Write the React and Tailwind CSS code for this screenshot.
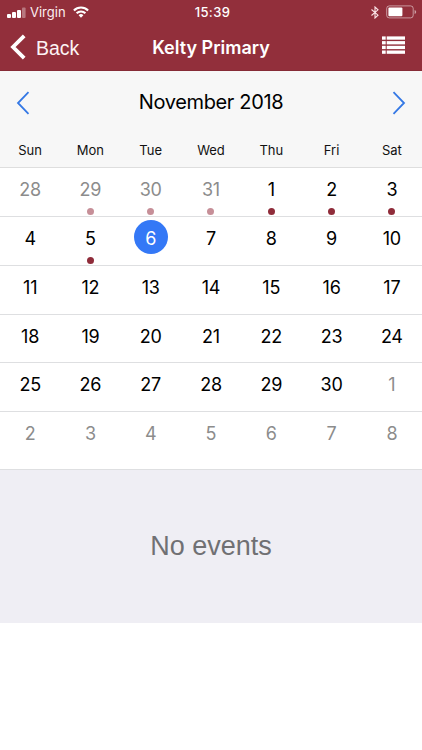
import React, { useState } from 'react';

const WEEKDAYS = ['Sun', 'Mon', 'Tue', 'Wed', 'Thu', 'Fri', 'Sat'];

// first grid cell is Sunday 28 October 2018
const GRID_START = new Date(2018, 9, 28);
const MONTH = 10;
const EVENT_CELLS = [1, 2, 3, 4, 5, 6, 8];

const ROW_HEIGHTS = ['h-[49px]', 'h-[49px]', 'h-[49px]', 'h-[48px]', 'h-[49px]', 'h-[58px]'];

const weeks = ROW_HEIGHTS.map((height, w) => ({
  height,
  days: WEEKDAYS.map((_, d) => {
    const index = w * 7 + d;
    const date = new Date(GRID_START.getFullYear(), GRID_START.getMonth(), GRID_START.getDate() + index);
    return {
      index,
      label: date.getDate(),
      outside: date.getMonth() !== MONTH,
      hasEvent: EVENT_CELLS.includes(index)
    };
  })
}));

function StatusBar() {
  return (
    <div className="h-6 grid grid-cols-3 items-center text-[13px] leading-6">
      <div className="flex items-center pl-[7px]">
        <svg width="19" height="11" viewBox="0 0 19 11" fill="#fff">
          <rect x="0" y="7" width="4" height="4" rx="1" />
          <rect x="5" y="5" width="4" height="6" rx="1" />
          <rect x="10" y="3" width="4" height="8" rx="1" />
          <rect x="15" y="0.5" width="3.6" height="10.5" rx="1" opacity="0.35" />
        </svg>
        <span className="ml-1 w-[37px] whitespace-nowrap font-['Inter','Liberation_Sans',sans-serif] text-[13px] text-[#fbeef0]">Virgin</span>
        <svg className="ml-[6px]" width="16" height="12" viewBox="0 0 16 12" fill="none" stroke="#fff" strokeWidth="2.1">
          <path d="M0.9 4.5a10 10 0 0 1 14.2 0" />
          <path d="M3.6 7.3a6.2 6.2 0 0 1 8.8 0" />
          <path d="M8 11.7L5.6 9.3a3.4 3.4 0 0 1 4.8 0z" fill="#fff" stroke="none" />
        </svg>
      </div>
      <span className="text-center font-['Inter','Liberation_Sans',sans-serif] font-medium tracking-[0.4px] pl-[3px]">15:39</span>
      <div className="flex items-center justify-end pr-[5px]">
        <svg width="8" height="13" viewBox="0 0 8 13" fill="none" stroke="#fbe4e7" strokeWidth="1.1">
          <path d="M0.5 3.5L7 9.2L4 12V1L7 3.8L0.5 9.5" />
        </svg>
        <svg className="ml-[7px]" width="31" height="14" viewBox="0 0 31 14">
          <rect x="0.7" y="0.9" width="26.5" height="12" rx="2.6" fill="none" stroke="#fff" strokeOpacity="0.5" />
          <rect x="2.4" y="2.6" width="14" height="8.6" rx="1" fill="#fff" />
          <path d="M28.6 5v4q1.6-.6 1.6-2t-1.6-2z" fill="#fff" opacity="0.55" />
        </svg>
      </div>
    </div>
  );
}

function NavBar() {
  return (
    <div className="h-[47px] grid grid-cols-[120px_1fr_120px] items-center border-b border-[#862b36]">
      <button className="flex items-center pl-[10px] text-left">
        <svg width="16" height="26" viewBox="0 0 16 26" fill="none" stroke="#fff" strokeWidth="3.8">
          <path d="M14.2 1.8L3 13L14.2 24.2" />
        </svg>
        <span className="ml-[10px] pt-[2px] font-['Liberation_Sans',sans-serif] text-[19.5px] leading-6 text-[#fdf3f4]">Back</span>
      </button>
      <h1 className="pt-[2px] text-center whitespace-nowrap font-['Inter','Liberation_Sans',sans-serif] text-[18px] leading-6 font-semibold">Kelty Primary</h1>
      <button className="flex justify-end pr-[17px]" aria-label="List view">
        <svg className="-mt-1" width="23" height="18" viewBox="0 0 23 18" fill="#fff">
          {[0.4, 5.1, 9.8, 14.5].map((y) => (
            <g key={y}>
              <rect x="0" y={y} width="3.7" height="3.3" />
              <rect x="4.7" y={y} width="18.3" height="3.3" />
            </g>
          ))}
        </svg>
      </button>
    </div>
  );
}

function Arrow({ next, onClick }) {
  return (
    <button onClick={onClick} aria-label={next ? 'Next month' : 'Previous month'}>
      <svg width="14" height="24" viewBox="0 0 14 24" fill="none" stroke="#3478e5" strokeWidth="1.8">
        <path d={next ? 'M1.5 1.2L12 12L1.5 22.8' : 'M12.5 1.2L2 12L12.5 22.8'} />
      </svg>
    </button>
  );
}

function Day({ day, selected, onSelect }) {
  let color = day.outside ? 'text-[#8c8c8c]' : 'text-black';
  if (selected) color = 'bg-[#3478f6] text-white';
  return (
    <button onClick={() => onSelect(day.index)} className="flex flex-col items-center pt-[3.4px]">
      <span className={`size-[34px] pt-[3px] rounded-full flex items-center justify-center text-[18px] leading-none tracking-[-0.2px] ${color}`}>
        {day.label}
      </span>
      {day.hasEvent && (
        <span className={`mt-[2.2px] size-[7px] rounded-full ${day.outside ? 'bg-[#c68f98]' : 'bg-[#8f2c3a]'}`} />
      )}
    </button>
  );
}

export default function App() {
  const [selected, setSelected] = useState(9);

  return (
    <div className="w-full h-[750px] bg-white overflow-hidden font-['Inter','Liberation_Sans',sans-serif]">
      <header className="bg-[#922f3b] text-white">
        <StatusBar />
        <NavBar />
      </header>

      {/* Month + weekday names */}
      <div className="h-[97px] bg-[#f7f7f7] border-b border-[#dedede]">
        <div className="h-[63px] flex items-center justify-between px-4">
          <Arrow />
          <h2 className="pb-[2px] text-[20px] leading-6 tracking-[-0.35px] text-black">November 2018</h2>
          <Arrow next />
        </div>
        <div className="grid grid-cols-7 text-center text-[13px] leading-8 text-[#111]">
          {WEEKDAYS.map((name) => <span key={name}>{name}</span>)}
        </div>
      </div>

      {weeks.map((week, i) => (
        <div key={i} className={`grid grid-cols-7 items-start border-b border-[#dedfe1] ${week.height}`}>
          {week.days.map((day) => (
            <Day key={day.index} day={day} selected={selected === day.index} onSelect={setSelected} />
          ))}
        </div>
      ))}

      <div className="h-[153px] pb-[2px] bg-[#efeef4] flex items-center justify-center">
        <p className="font-['Liberation_Sans',sans-serif] text-[27px] leading-8 text-[#707073]">No events</p>
      </div>
    </div>
  );
}
